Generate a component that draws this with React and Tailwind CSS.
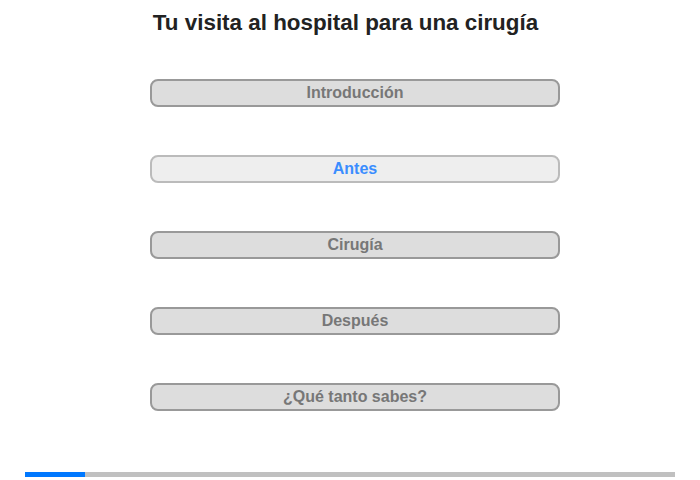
export default function App() {
  const items = ["Introducción", "Antes", "Cirugía", "Después", "¿Qué tanto sabes?"];
  return (
    <div className="w-[700px] h-[480px] bg-white flex flex-col font-['Liberation_Sans',Arial,sans-serif]">
      <div className="mt-[9px] flex justify-center pr-[9px]">
        <h1 className="text-[22.4px] leading-[28px] font-bold text-[#222]">Tu visita al hospital para una cirugía</h1>
      </div>
      <div className="mt-[42px] ml-[150px] flex flex-col gap-[48px]">
        {items.map((t, i) =>
          i === 1 ? (
            <div key={t} className="w-[410px] h-[28px] rounded-[8px] border-2 border-[#bbbbbb] bg-[#eeeeee] flex items-center justify-center text-[16px] font-bold text-[#3a8dff]">{t}</div>
          ) : (
            <div key={t} className="w-[410px] h-[28px] rounded-[8px] border-2 border-[#999999] bg-[#dddddd] flex items-center justify-center text-[16px] font-bold text-[#777777]">{t}</div>
          )
        )}
      </div>
      <div className="mt-auto mb-[3px] ml-[25px] w-[650px] h-[5px] bg-[#c0c0c0] flex">
        <div className="w-[60px] h-full bg-[#0078ff]" />
      </div>
    </div>
  );
}
